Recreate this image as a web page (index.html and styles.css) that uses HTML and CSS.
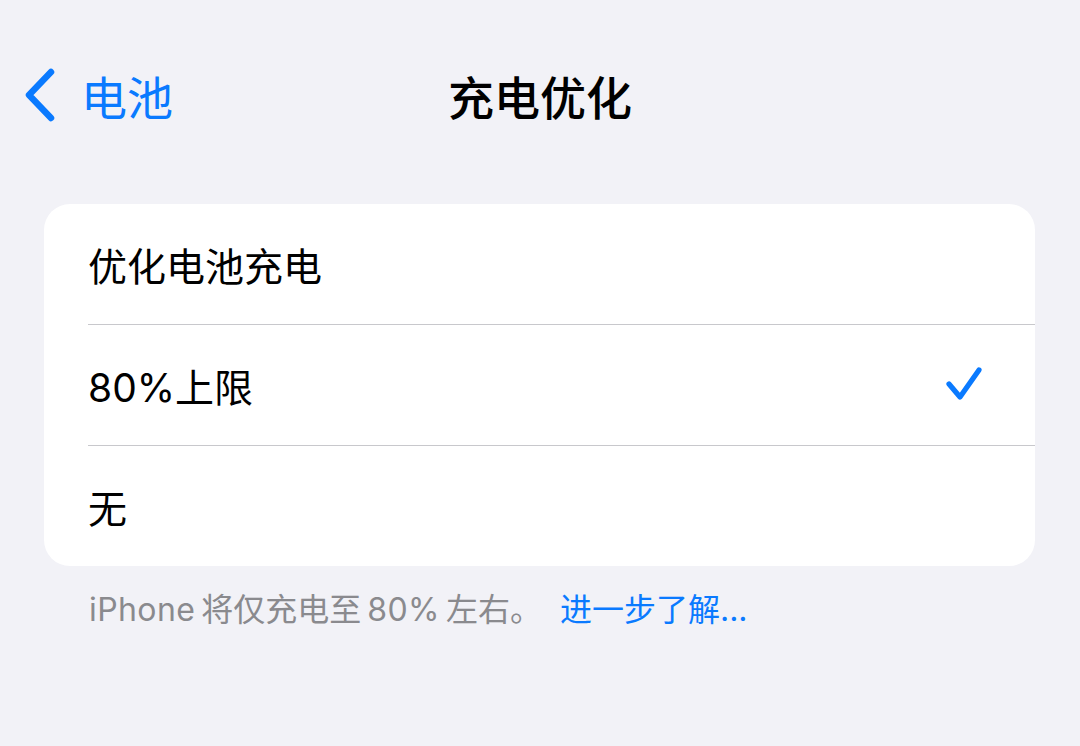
FILE: index.html
```html
<!DOCTYPE html>
<html lang="zh-CN">
<head>
  <meta charset="UTF-8" />
  <meta name="viewport" content="width=device-width, initial-scale=1.0"/>
  <title>充电优化</title>
  <link rel="stylesheet" href="styles.css">
</head>
<body>

<div class="navbar">
  <a class="back" href="#">
    <svg class="chevron" width="36" height="56" viewBox="0 0 36 56">
      <path d="M31 5 L9 28 L31 51" fill="none" stroke="#0a7aff" stroke-width="6.5" stroke-linecap="round" stroke-linejoin="round"/>
    </svg>
    <span>电池</span>
  </a>
  <h1>充电优化</h1>
  <div></div>
</div>

<div class="group">
  <div class="row">
    <span>优化电池充电</span>
  </div>
  <div class="row">
    <span>80%上限</span>
    <svg class="check" width="40" height="40" viewBox="0 0 40 40">
      <path d="M4 19 L15 32 L34 5" fill="none" stroke="#0a7aff" stroke-width="5.2" stroke-linecap="round" stroke-linejoin="round"/>
    </svg>
  </div>
  <div class="row">
    <span>无</span>
  </div>
</div>

<p class="footer">
  <span class="latin">iPhone</span><span class="gap"></span>将仅充电至<span class="gap"></span><span class="latin">80%</span><span class="gap"></span>左右。<a href="#">进一步了解...</a>
</p>

</body>
</html>
```

FILE: styles.css
```css
html, body {
  margin: 0;
  padding: 0;
  background: #f2f2f7;
  font-family: Inter, "Noto Sans CJK SC", sans-serif;
  color: #000;
}
.navbar {
  height: 190px;
  display: grid;
  grid-template-columns: 1fr auto 1fr;
  align-items: center;
}
.back {
  display: flex;
  align-items: center;
  gap: 25px;
  padding-left: 20px;
  color: #0a7aff;
  text-decoration: none;
  font-size: 46px;
  font-family: "Noto Sans CJK SC", sans-serif;
}
.back span {
  line-height: 56px;
}
.navbar h1 {
  margin: 0;
  font-size: 46px;
  font-weight: 500;
  font-family: "Noto Sans CJK SC", sans-serif;
}
.group {
  margin: 14px 45px 0 44px;
  background: #fff;
  border-radius: 26px;
  overflow: hidden;
}
.row {
  height: 120px;
  display: flex;
  align-items: center;
  justify-content: space-between;
  margin-left: 44px;
  padding-right: 50px;
  font-size: 39px;
  border-bottom: 1px solid #c8c8cc;
}
.row:last-child {
  border-bottom: none;
}
.check {
  display: block;
}
.footer {
  margin: 18px 0 0 89px;
  font-size: 32px;
  color: #8a8a8e;
  white-space: nowrap;
}
.footer .latin {
  letter-spacing: 0.4px;
}
.footer .gap {
  display: inline-block;
  width: 6px;
}
.footer a {
  color: #0a7aff;
  text-decoration: none;
  margin-left: 18px;
}
```
